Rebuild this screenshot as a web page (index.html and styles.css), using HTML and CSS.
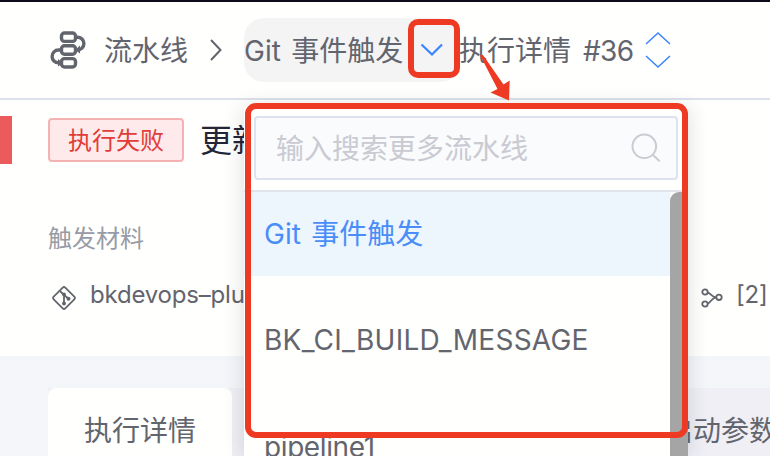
FILE: index.html
```html
<!DOCTYPE html>
<html lang="zh-CN">
<head>
<meta charset="utf-8">
<title>流水线</title>
<link rel="stylesheet" href="styles.css">
</head>
<body>
<div class="page">
  <header class="header">
    <svg class="logo" width="36" height="38" viewBox="0 0 36 38" fill="none" stroke="currentColor" stroke-width="3.4">
      <rect x="11.500" y="2" width="14" height="8.400" rx="3"/>
      <rect x="11.500" y="14.800" width="14" height="8.400" rx="3"/>
      <rect x="11.500" y="27.600" width="14" height="8.400" rx="3"/>
      <path d="M25 6.200h2.500a6.400 6.400 0 0 1 0 12.800M12 19H8.500a6.400 6.400 0 0 0 0 12.800h2"/>
      <path d="M30 14.500v8l-5-3.500zM8 28l5 4-5 3.500z" fill="currentColor" stroke="none"/>
    </svg>
    <span class="crumb root">流水线</span>
    <svg class="chevron" width="12" height="24" viewBox="0 0 12 24"><path d="M1 2l9.500 10L1 22"/></svg>
    <div class="pill">
      <span>Git <span class="han">事件触发</span></span>
      <span class="toggle"><svg width="24" height="14" viewBox="0 0 24 14"><path d="M1.500 1.500L12 11.500 22 1.500"/></svg></span>
    </div>
    <span class="crumb detail">执行详情</span>
    <span class="number">#36</span>
    <svg class="stepper" width="26" height="38" viewBox="0 0 26 38"><path d="M1 13L13 2l12 11M1 25l12 11 12-11"/></svg>
  </header>

  <section class="summary">
    <div class="title-row">
      <span class="status-bar"></span>
      <span class="badge">执行失败</span>
      <h1>更新</h1>
    </div>
    <div class="label">触发材料</div>
    <div class="material">
      <svg class="git" width="26" height="26" viewBox="0 0 26 26" fill="none" stroke="currentColor" stroke-width="1.800">
        <rect x="4.800" y="4.800" width="16.400" height="16.400" rx="1.800" transform="rotate(45 13 13)"/>
        <path d="M9 6l4 4v9M13 10l5 4"/>
        <g fill="currentColor" stroke="none"><circle cx="13" cy="9.500" r="1.900"/><circle cx="13" cy="18.500" r="2"/><circle cx="17.500" cy="13.700" r="2"/></g>
      </svg>
      <span class="repo">bkdevops–plu</span>
      <svg class="branch" width="22" height="20" viewBox="0 0 22 20" fill="none" stroke="currentColor" stroke-width="1.800">
        <circle cx="4" cy="4" r="2.700"/><circle cx="4" cy="16" r="2.700"/><circle cx="18" cy="9.300" r="2.700"/>
        <path d="M6.700 4.500c3 .5 3.500 4.800 8.600 4.800M6.700 15.500c3.300-.4 3-5.500 8.600-6.200"/>
      </svg>
      <span class="count">[2]</span>
    </div>
  </section>

  <nav class="tabs">
    <span class="tab active">执行详情</span>
    <span class="tab last">启动参数</span>
  </nav>
</div>

<div class="dropdown">
  <div class="search-wrap">
    <div class="search">
      <span>输入搜索更多流水线</span>
      <svg width="30" height="30" viewBox="0 0 30 30"><circle cx="13.300" cy="13.300" r="11.800"/><path d="M21.700 21.700l7 6.500"/></svg>
    </div>
  </div>
  <div class="list">
    <div class="options">
      <div class="option selected">Git <span class="han">事件触发</span></div>
      <div class="option message">BK_CI_BUILD_MESSAGE</div>
      <div class="option pipeline">pipeline1</div>
    </div>
    <div class="scrollbar"></div>
  </div>
</div>

<div class="mark mark-toggle"></div>
<div class="mark mark-menu"></div>
<svg class="arrow" width="34" height="48" viewBox="0 0 34 48"><path d="M1 1l3 0 20.500 29.500 6.200-4L30 46.500 11.500 38.500l7-3.500z"/></svg>
</body>
</html>
```
FILE: styles.css
```css
* { box-sizing: border-box; }
body {
  margin: 0;
  width: 770px;
  height: 456px;
  overflow: hidden;
  position: relative;
  background: #fff;
  color: #63656e;
  font: 28px/40px Inter, "Noto Sans CJK SC", sans-serif;
  white-space: nowrap;
}
svg { display: block; flex: none; }
span { flex: none; }
.page { height: 456px; overflow: hidden; background: #fffffd; }
.header {
  height: 100px;
  border-top: 2px solid #0c0c1c;
  border-bottom: 2px solid #dce1ec;
  display: flex;
  align-items: center;
  padding-left: 50px;
}
.root { margin-left: 18px; padding-top: 1px; }
.detail, .number, .pill > span:first-child { padding-top: 1px; }
.detail { margin-left: -1px; }
.han { margin-left: 2.5px; }
.chevron { margin-left: 22px; }
.chevron path, .toggle path, .stepper path { fill: none; stroke: #63656e; stroke-width: 2; }
.pill {
  display: flex;
  align-items: center;
  width: 216px;
  height: 64px;
  margin-left: 22px;
  border-radius: 20px;
  background: #f4f4f5;
}
.toggle { margin-left: auto; margin-right: 16px; }
.toggle path { stroke: #3a84ff; stroke-width: 2.2; }
.number { margin-left: 12px; letter-spacing: -.7px; }
.stepper { margin-left: 12px; }
.stepper path { stroke: #3a84ff; stroke-width: 1.5; }
.summary { height: 256px; padding-top: 16px; }
.title-row { display: flex; align-items: center; height: 48px; }
.status-bar { width: 12px; height: 48px; background: #ec5b5b; }
.badge {
  width: 136px;
  height: 44px;
  margin-left: 36px;
  border: 2px solid #f4b2b2;
  border-radius: 4px;
  background: #feeaea;
  color: #e23c39;
  font-size: 24px;
  line-height: 41px;
  text-align: center;
}
h1 { margin: 0 0 0 16px; padding-top: 2px; font-size: 32px; line-height: 48px; font-weight: 400; color: #242637; }
.label { margin: 57px 0 0 48px; color: #979ba5; font-size: 24px; line-height: 36px; }
.material { display: flex; align-items: center; height: 40px; margin-top: 18px; padding-left: 51px; font-size: 24px; }
.git { margin-top: 5px; }
.repo { width: 611px; margin-left: 13px; letter-spacing: -.2px; }
.branch { margin-top: 5px; }
.count { margin-left: 13px; letter-spacing: -.2px; }
.tabs {
  display: flex;
  height: 100px;
  padding: 32px 0 0 48px;
  background: linear-gradient(#f5f6fa 32px, transparent 32px), linear-gradient(90deg, #f5f6fa 48px, #efeff5 48px);
}
.tab { width: 184px; line-height: 86px; height: 68px; text-align: center; }
.active { border-radius: 8px 8px 0 0; background: #fffffd; }
.last { width: 112px; margin-left: 433px; }

.dropdown {
  position: absolute;
  left: 244px;
  top: 104px;
  width: 444px;
  height: 352px;
  overflow: hidden;
  background: #fffffd;
  border-radius: 8px 8px 0 0;
}
.page::after {
  content: "";
  position: absolute;
  left: 244px;
  top: 108px;
  width: 444px;
  height: 348px;
  box-shadow: 0 0 20px rgba(35, 35, 65, .16);
}
.search-wrap { height: 88px; padding: 12px 10px 0; border-bottom: 2px solid #e1e4ea; }
.search {
  display: flex;
  align-items: center;
  justify-content: space-between;
  height: 64px;
  padding: 0 15px 0 20px;
  border: 2px solid #dce2ef;
  border-radius: 4px;
  background: #fafbfc;
  color: #c9cad2;
}
.search > span { padding-top: 1px; }
.search svg { fill: none; stroke: #cbccd3; stroke-width: 2; }
.list { display: flex; height: 264px; }
.options { display: flex; flex-direction: column; gap: 22px; width: 426px; }
.option { flex: none; height: 84px; padding-left: 20px; line-height: 85px; }
.message { letter-spacing: .25px; }
.pipeline { height: 52px; line-height: 86px; letter-spacing: -.4px; }
.selected { background: #edf5fd; color: #4a8df8; }
.scrollbar { width: 18px; border-radius: 9px 0 0 0; background: #a5a5a5; }
.mark { position: absolute; border: 6px solid #ef3a23; }
.mark-toggle { left: 408px; top: 19px; width: 52px; height: 59px; border-radius: 10px; }
.mark-menu { left: 245px; top: 103px; width: 443px; height: 335px; border-radius: 11px; }
.arrow { position: absolute; left: 479px; top: 54px; fill: #ef3a23; }
```
